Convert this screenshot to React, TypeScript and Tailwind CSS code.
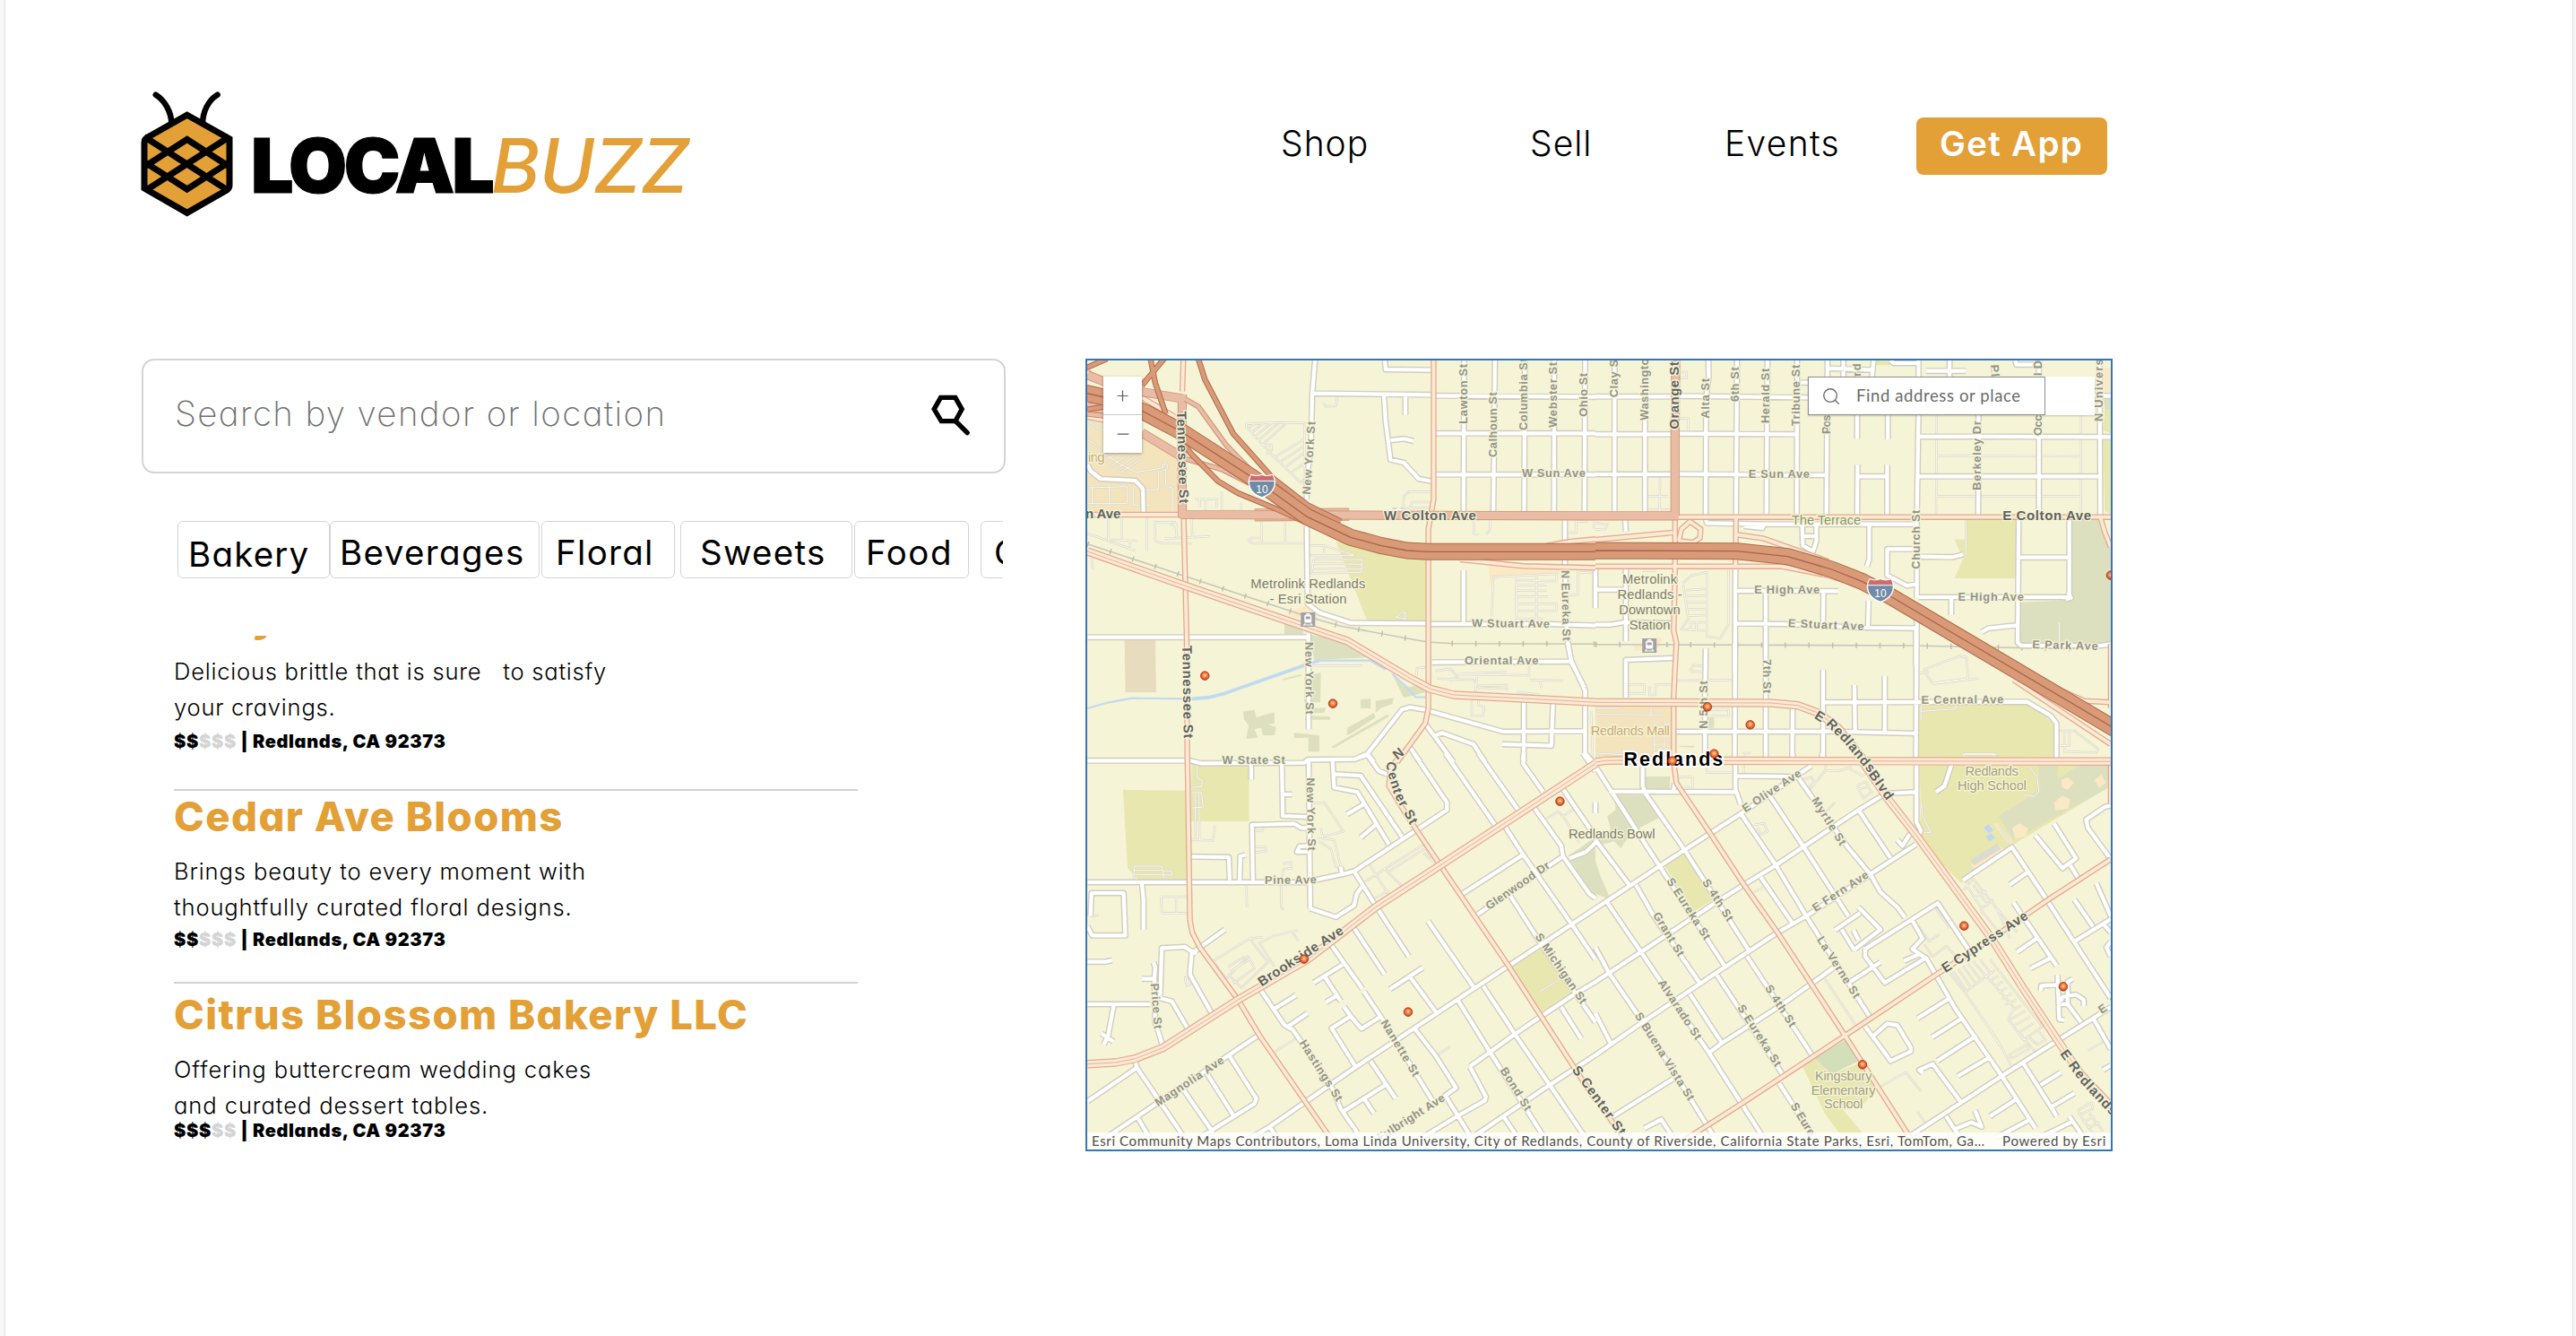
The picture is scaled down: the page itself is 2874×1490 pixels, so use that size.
import { Fragment } from "react";
import { Minus, Plus, Search } from "lucide-react";
import { clsx } from "clsx";

type Tile = "nw" | "ne" | "sw" | "se";
type Layer = Partial<Record<Tile, string[]>>;
type Point = [number, number];

const MAP_WIDTH = 1142;
const MAP_HEIGHT = 880;

// every tile has its own coordinate grid, x and y scale differ
const tiles: Record<Tile, { x: number; y: number; sx: number; sy: number }> = {
  nw: { x: -13, y: -12, sx: 580 / 1568, sy: 1 / 3 },
  ne: { x: 567, y: -12, sx: 590 / 1568, sy: 1 / 3 },
  sw: { x: -13, y: 438, sx: 580 / 1568, sy: 1 / 3 },
  se: { x: 567, y: 438, sx: 590 / 1568, sy: 1 / 3 },
};

function project(tile: Tile, x: number, y: number): Point {
  const t = tiles[tile];
  return [t.x + x * t.sx, t.y + y * t.sy];
}

function toPoints(tile: Tile, line: string): Point[] {
  return line.split(" ").map((pair) => {
    const [x, y] = pair.split(",").map(Number);
    return project(tile, x, y);
  });
}

function toPath(tile: Tile, line: string) {
  return "M" + toPoints(tile, line).map(([x, y]) => `${x.toFixed(1)} ${y.toFixed(1)}`).join("L");
}

function layerPath(layer: Layer) {
  return (Object.keys(layer) as Tile[])
    .flatMap((tile) => layer[tile]!.map((line) => toPath(tile, line)))
    .join("");
}

/* ---------- areas ---------- */

const parks: Layer = {
  nw: ["785,640 1062,700 1062,910 880,910"],
  ne: [
    "1098,570 1248,570 1248,765 1065,765 1090,700 1065,635 1098,635",
    "960,1185 1280,1185 1340,1230 1363,1260 1363,1372 955,1372",
    "825,36 955,36 955,52 830,52",
    "1505,300 1528,300 1528,550 1510,540",
    "1510,200 1528,190 1528,280 1505,270",
  ],
  sw: [
    "143,123 332,125 335,425 190,425 157,385",
    "350,35 523,35 523,228 348,228",
    "1315,715 1405,655 1500,805 1400,870",
  ],
  se: [
    "960,0 1360,0 1360,38 1528,38 1528,110 1240,305 1085,435 955,290 965,200",
    "205,375 265,337 350,490 290,530",
    "615,1050 650,1020 700,1075 800,1030 840,1115 790,1180 735,1195 795,1275 725,1275 680,1205",
  ],
};

const greens: Layer = {
  nw: [
    "630,915 680,930 690,952 630,952",
    "705,952 800,975 880,1030 720,1038",
    "690,1095 740,1080 738,1180 690,1180",
    "625,1102 680,1085 680,1092 625,1106",
    "505,1210 540,1205 545,1230 600,1213 600,1250 580,1255 605,1262 600,1290 565,1290 560,1265 540,1270 550,1298 515,1302 522,1258 508,1236",
    "658,1282 735,1290 735,1345 702,1345 702,1298 660,1300",
    "700,1200 756,1198 750,1214 700,1218",
    "712,1225 768,1228 768,1238 712,1238",
    "860,1170 890,1168 890,1200 860,1200",
    "905,1175 960,1165 955,1185 920,1200 905,1215",
    "820,1265 900,1215 905,1230 830,1285 818,1290",
    "770,1330 940,1220 945,1228 780,1333",
    "955,1085 1000,1130 1040,1120 1060,1145 990,1165",
  ],
  ne: [
    "1410,570 1495,570 1528,665 1528,985 1260,985 1258,845 1405,838",
    "1505,160 1528,160 1528,200 1510,200",
    "335,1230 352,1230 352,1265 335,1265",
    "248,1325 295,1325 290,1331 250,1329",
  ],
  sw: ["1568,280 1485,345 1560,480 1568,480"],
  se: [
    "1195,210 1435,40 1525,40 1515,120 1240,290",
    "1315,42 1370,42 1370,118 1315,118",
    "55,140 150,140 190,215 110,262 75,318 55,295 0,312 0,290 45,255 35,210 60,190",
    "145,78 222,78 220,120 148,120",
    "0,360 15,410 45,490 0,470",
  ],
};

const lots: Layer = {
  nw: ["36,232 90,245 205,290 322,380 322,548 205,548 36,545"],
  ne: ["0,1195 228,1195 228,1380 0,1380"],
};

const paleLots: Layer = {
  nw: ["1245,700 1480,730 1480,752 1280,756 1250,790", "630,885 680,862 700,850 730,890 720,925 690,905"],
  ne: ["1505,60 1528,60 1528,160 1505,150", "115,990 195,960 195,980 180,1005 115,1007"],
  se: [
    "1382,90 1402,80 1418,100 1400,122 1382,112",
    "1480,90 1500,72 1513,98 1495,116",
    "1360,165 1385,142 1408,155 1402,185 1365,192",
    "1236,250 1258,235 1283,252 1275,278 1245,285",
    "1112,372 1200,310 1215,325 1125,388",
    "1180,235 1195,235 1240,300 1225,305",
  ],
};

const pools: Layer = {
  se: ["1152,250 1165,238 1180,258 1166,268", "1158,280 1175,268 1185,284 1168,294"],
};

/* ---------- lines ---------- */

const water: Layer = {
  nw: ["36,1200 100,1180 170,1166 350,1168", "730,1040 890,1040 935,1070", "955,1085 1000,1130 1025,1162 1060,1163"],
};

const rail: Layer = {
  nw: ["36,650 700,893 800,925 1000,966 1062,978 1140,983 1568,985"],
  ne: ["0,986 930,990 1400,1001 1500,992"],
};

const lanes: Layer = {
  nw: [
    "515,265 515,248 610,244 690,245 692,430 680,445 600,360 520,265",
    "540,248 522,262", "565,247 530,278", "590,246 540,292", "612,246 550,305", "635,246 562,320",
    "600,360 690,300", "615,378 690,322", "630,395 690,345", "650,412 690,380", "562,320 590,318 592,335 575,350",
    "748,178 755,190 785,188 790,155",
    "36,240 90,275", "36,300 60,318 90,350 130,380 180,410 210,405", "100,395 165,345", "115,405 185,352", "130,415 200,365", "85,375 140,335",
    "210,405 265,395 262,385 275,382 278,395 260,408", "36,462 155,458 155,515 36,515", "50,460 50,515", "102,458 102,512", "175,465 175,520 230,520", "195,470 250,468 250,405", "272,400 272,455 292,462 292,540",
    "360,500 425,500 425,530", "375,500 375,528", "392,500 392,545", "441,475 441,540 500,540 500,512",
    "988,530 990,490 1005,475 1075,475", "1010,525 1015,510 1075,510", "965,545 985,530 1075,528",
    "98,560 98,635 185,640", "140,560 140,635", "165,640 165,668", "215,560 215,675", "36,615 180,672",
    "240,570 240,640 265,648 350,648", "268,632 405,625", "285,585 303,585 305,628", "350,565 352,628", "243,577 300,577 300,600",
    "560,560 562,648 690,648", "632,560 632,648", "520,640 530,630 560,630", "520,640 535,648 560,648",
    "705,655 750,655 840,688 705,688", "718,700 865,703 862,745 712,748 718,700", "716,715 862,718", "714,731 862,733", "748,655 750,680",
    "1200,572 1202,615 1215,620", "1250,570 1250,600 1240,618", "1480,612 1510,612 1510,575 1545,575", "1563,570 1563,600",
    "1255,890 1260,760 1450,750 1450,775 1328,770 1328,900", "1328,788 1420,788", "1328,806 1420,806", "1328,826 1425,826", "1328,850 1450,850 1450,873 1328,873", "1390,755 1390,900",
    "1330,830 1330,900 1410,900", "1515,740 1515,820 1490,822", "1515,745 1568,748",
    "710,1057 865,1057", "50,695 52,735",
    "967,895 985,878 995,880 995,910", "967,895 995,900",
    "1028,1090 1030,1065 1060,1062", "1085,1075 1130,1068 1145,1085 1368,1090 1368,1055", "1090,1100 1200,1105 1215,1130 1305,1135", "1130,1110 1160,1085 1300,1078", "1210,1095 1205,1160", "1215,1125 1305,1122", "1195,1165 1195,1225 1230,1225 1232,1195 1215,1190 1215,1165", "1335,1160 1335,1145 1400,1155", "1370,1105 1470,1108", "1400,1108 1405,1132",
    "1555,1210 1560,1370",
  ],
  ne: [
    "250,75 270,75 270,95 250,95", "250,230 275,230 275,270", "150,490 215,490", "192,425 190,540", "150,535 225,535",
    "1012,215 1010,550", "1012,355 1440,357", "1012,490 1440,490", "1440,215 1440,550", "1098,570 1098,685",
    "0,580 35,585 30,600 0,602",
    "285,755 330,745 330,960 370,965 395,920 395,735", "260,780 285,755", "260,785 275,900 255,935 325,940", "270,805 325,800", "270,825 325,822", "270,845 325,845", "272,868 325,868", "275,890 325,888", "278,912 325,912", "285,910 280,940", "300,910 298,940",
    "235,1108 410,1105", "280,1075 290,1055 322,1058", "280,1075 322,1080", "90,1120 145,1120 145,1150 90,1150", "160,1125 160,1155 178,1155 178,1120 225,1120",
    "0,1220 205,1222", "0,1200 70,1200", "165,1195 165,1222", "0,1350 85,1355 85,1335", "175,1240 175,1380", "205,1240 205,1380", "175,1262 205,1262", "175,1290 205,1290", "175,1320 205,1320", "175,1350 205,1350",
    "330,1205 395,1205 395,1225 340,1225",
    "960,1082 985,1080 975,1070 1080,1025 1100,1028 1105,1100 1000,1115 980,1085", "1135,1100 1000,1118",
    "965,1210 1070,1202 1070,1190", "965,1185 965,1240", "1085,1370 1095,1352 1175,1352 1190,1368",
    "1372,1275 1420,1275 1490,1335 1485,1348 1390,1345 1390,1275", "1375,1325 1405,1325 1405,1280",
    "1375,912 1375,980", "140,740 180,740", "150,1370 150,1380",
  ],
  sw: [
    "258,480 335,480", "258,480 260,535 338,535", "303,480 303,535", "345,290 415,292 420,240", "365,30 368,85 382,90 380,112 345,115",
    "345,132 380,132 385,180 345,184", "360,135 362,290", "372,135 374,290", "715,168 750,165 808,262 730,283", "740,250 745,285 780,290 800,380",
    "735,295 770,320 785,380 805,382", "175,425 178,378 260,378 268,425", "178,392 262,392", "178,406 290,408 290,395 265,395", "865,435 1050,305 1080,365 1050,335",
    "885,370 945,475", "930,385 985,445", "945,395 1060,315", "895,490 945,460", "415,695 525,620 565,615", "415,695 455,755 520,680 540,720 475,770",
    "525,620 580,700 500,785 460,740", "460,715 510,680", "468,730 525,690", "600,715 555,635 600,610 670,592", "655,600 672,628", "600,1000 665,955", "515,435 517,515", "620,435 620,515 628,525",
    "535,262 565,258 565,240", "535,332 575,328 572,314 537,314", "625,370 650,365 652,385 628,388 620,425", "1090,1012 1130,980", "1400,798 1465,755",
    "332,765 330,750 345,752 345,775 335,778 332,765", "1420,220 1455,195 1470,210 1505,185", "1470,210 1520,300", "45,545 70,542",
  ],
  se: [
    "330,48 330,65 410,65 410,40", "245,120 245,80 288,80 288,120 265,110", "630,130 680,60 685,35", "610,90 640,80 650,100 630,115", "650,150 680,200 710,165", "685,58 720,60 760,45",
    "750,50 790,75 820,60", "775,110 800,95 820,130 795,150 775,110", "780,120 810,112", "470,240 500,235 510,262 490,272 480,250", "470,465 500,448", "460,0 440,0 440,70",
    "965,165 970,210 995,265 970,265", "1090,5 1190,5 1175,0", "1310,80 1315,130 1300,145 1270,140", "1285,45 1310,80", "1195,240 1235,310",
    "1090,460 1120,420 1190,520 1250,600", "1105,450 1145,520", "1120,440 1165,510", "1145,520 1180,490", "1120,485 1160,460", "1140,520 1190,590", "1190,520 1230,620",
    "945,560 990,630 1020,605", "975,640 1000,680 1040,645 1070,680", "1010,520 1050,585",
    "1050,735 1095,800 1180,730", "1060,730 1100,795", "1075,722 1115,785", "1090,712 1130,775", "1105,705 1145,762", "1120,695 1160,750", "1140,690 1175,740", "1170,690 1325,915 1270,960 1225,890 1240,850 1150,735",
    "1185,725 1160,745", "1195,745 1170,762", "1208,765 1182,782", "1220,785 1195,800", "1235,805 1205,822", "1248,825 1215,842", "1262,845 1232,862", "1275,862 1232,890", "1290,882 1240,912", "1300,902 1255,935",
    "1095,800 1200,975 1235,1050", "1150,890 1200,980", "1225,1010 1280,975 1285,990 1235,1020 1225,1010", "1260,940 1305,1000", "1280,945 1310,975 1335,960 1310,925",
    "680,755 775,915", "845,1115 920,1068 965,1130", "740,1100 770,1085 810,1130", "755,1120 780,1160", "955,1200 980,1240", "1460,995 1510,962",
    "1430,1195 1470,1170 1475,1190 1435,1210 1430,1195", "1440,1215 1480,1280", "1465,1205 1505,1265", "1445,1235 1480,1215", "1458,1255 1495,1235", "1100,425 1105,455",
  ],
};

const streets: Layer = {
  nw: [
    "722,36 714,148 710,320 697,440 697,500", "697,590 700,850 735,880 830,914 1062,916", "1065,918 1430,918 1568,923",
    "702,950 703,1270", "36,962 700,962", "714,146 1075,151", "1085,154 1568,158", "933,36 935,66 1075,68",
    "930,150 935,240 950,368 990,378 1035,432 1075,440", "950,303 990,298 1020,306", "995,150 995,218",
    "1085,280 1568,280", "1085,418 1568,418", "1172,36 1170,545", "1265,36 1260,545", "1355,36 1353,545", "1444,36 1443,548", "1537,36 1535,548",
    "1170,738 1170,916", "1476,570 1476,710 1482,960 1495,1040 1537,1140 1537,1350 1560,1380", "1484,980 1495,1045 1535,1130", "1075,1046 1490,1043",
    "36,385 45,405 75,432 180,438 203,465 205,548", "1070,1210 1290,1278 1537,1276", "1352,1175 1352,1380", "1440,1185 1435,1325 1287,1320",
    "1065,1207 1010,1196 985,1204 880,1352 842,1370", "1057,1255 1140,1380", "1083,1292 1105,1282 1200,1320 1235,1380", "1005,1325 1040,1380", "880,1352 900,1380",
    "975,530 975,545", "955,540 990,540",
  ],
  ne: [
    "0,157 225,157", "250,155 630,160", "0,283 225,283", "250,281 595,283", "0,417 225,417", "250,416 685,420", "57,36 57,548", "147,36 147,545",
    "335,36 336,90 328,160 327,560", "420,36 417,550", "510,36 507,550", "598,36 597,550", "688,36 685,550", "776,215 776,298", "777,385 776,555",
    "867,215 867,300", "865,385 865,555", "776,424 865,424", "958,36 958,215 953,560 953,830", "953,900 950,1380", "960,290 1528,292", "958,424 1495,424",
    "1136,215 1135,552", "1315,36 1315,540", "1495,36 1497,552", "690,62 825,68", "735,36 735,95", "825,36 820,92", "610,110 630,110", "980,71 1098,71", "1050,36 1050,90",
    "1245,36 1248,50 1310,50", "1480,153 1528,155", "875,36 885,45 955,45", "1180,50 1185,90",
    "327,565 330,580 500,584 950,584", "440,590 495,597 500,585", "613,590 615,655 645,675 655,640 655,590", "618,624 655,624", "812,590 812,700 805,725",
    "955,667 865,667 865,755 925,790 955,782", "960,692 1060,694 1090,685", "1255,570 1252,980 1262,990 1500,990 1528,985", "1405,570 1405,830 1380,828",
    "1255,695 1405,695", "958,828 1400,828", "1400,810 1410,830 1395,835", "1055,830 1055,888", "1145,945 1165,932 1250,922", "415,735 413,1380", "413,985 413,1080",
    "418,806 720,808", "676,810 675,916", "505,810 505,1180", "418,916 560,918 800,930 950,932", "810,840 808,930", "0,803 90,803", "90,735 90,975",
    "0,920 45,920 85,912 225,916", "88,570 90,608", "0,735 0,865", "228,1032 90,1038 90,1165", "327,1000 325,1160", "325,1200 325,1380", "505,1195 505,1380",
    "585,1200 583,1380", "675,1070 675,1380", "680,1180 1280,1178 1350,1225 1367,1250 1367,1380", "768,1122 770,1280", "858,1092 858,1278", "235,1278 700,1277 950,1284", "950,930 950,1060",
  ],
  sw: [
    "36,25 345,25 378,34 690,32 700,22 842,20 880,5 915,60 945,72", "530,32 530,88", "622,30 625,210 700,213", "625,138 653,138", "703,25 708,520",
    "775,25 780,115 850,130 945,305", "780,70 860,75 985,280", "818,205 868,172", "860,282 905,240", "535,425 532,240 660,236 680,250 700,250",
    "700,310 675,312 668,330 700,330", "345,346 462,348 465,425", "495,425 497,345 513,340", "36,432 690,432 805,405 840,395 1120,190 1120,165 1020,0",
    "708,520 785,548 840,510 848,470 865,445", "800,380 803,405", "840,395 905,510 1005,680", "840,585 932,740", "770,640 865,788", "870,798 925,890 1075,1160",
    "718,768 805,708", "753,750 800,830", "755,833 790,810", "810,848 830,880 772,920 845,1050", "830,880 862,922 915,885",
    "560,795 630,910 655,925 770,1110 800,1190 850,1270", "600,855 665,810", "640,915 700,870", "1063,562 1205,790", "948,790 1047,718", "1010,750 1088,868",
    "440,1345 585,1250 845,1050 1205,785 1405,640 1568,520", "585,1250 610,1290", "805,1200 935,1110", "1190,1048 1250,1000 1325,940 1405,880 1500,810 1568,765",
    "1190,1050 1238,1150 1235,1162 1155,1212 1040,1290", "1190,1290 1290,1215 1430,1110 1568,1010", "1025,925 1088,1015 1148,1120 1115,1145 1190,1280", "890,1030 965,1155",
    "870,1155 900,1205", "1155,830 1250,1000 1410,1280", "1230,780 1325,940 1430,1110 1540,1290", "1290,1215 1330,1280", "1115,0 1265,240", "1295,245 1350,340 1495,570 1568,690",
    "1215,0 1335,190", "1350,0 1350,35 1410,130", "1385,185 1465,310 1470,345", "1470,120 1568,280", "1530,0 1568,60", "1165,472 1350,340", "1205,545 1470,345", "1490,352 1540,330 1568,300",
    "1310,475 1405,640 1568,900", "1470,345 1550,470 1568,485", "1465,850 1525,955", "1568,165 1568,200",
    "36,580 50,610 150,610 145,468 48,468 45,545", "200,435 205,490 205,590", "36,698 90,698 110,693", "235,700 240,715 238,755 200,755",
    "36,840 225,840", "365,670 345,660 330,648 260,652 255,820 290,830 340,925", "450,590 350,670 345,740 413,875", "238,755 240,900 262,975",
    "115,845 98,945 85,975", "78,938 115,965", "36,1165 185,1052", "180,1030 185,1052 330,1290", "80,1295 550,945", "185,1215 225,1290", "325,1125 415,1270",
    "395,1070 475,1210", "465,1015 545,1155 540,1172 370,1290",
  ],
  se: [
    "0,520 190,378 430,203 640,42", "0,765 135,665 350,505 440,440 535,375 780,190 860,135 950,130", "0,1010 140,900 375,722 540,600 625,545 815,405 950,305",
    "340,1000 375,970 555,840 710,715", "45,1220 230,1090", "0,45 190,378 385,715", "360,742 555,1075", "545,1105 650,1290", "145,130 265,325 455,660", "450,680 645,1015",
    "430,200 535,375 625,545 815,885", "515,140 620,318 750,545", "600,80 745,310 815,405 845,465 895,515 918,550", "780,190 875,350", "490,415 585,570",
    "0,290 100,440", "120,440 170,540 310,770", "35,500 135,665 335,1000 500,1290", "0,650 40,735 140,900 350,1280", "280,805 375,970", "0,870 45,970",
    "40,128 420,130", "140,45 140,110 150,135", "235,100 232,125", "415,30 415,120 430,170", "420,76 560,78 600,80", "952,30 952,230 965,260 955,285", "955,260 930,275 910,310 895,290",
    "1055,40 1035,110 1010,130", "585,0 585,20", "672,0 672,22", "1367,0 1367,20", "505,0 505,20", "1090,425 1235,315 1335,485 1528,820",
    "1305,275 1385,385 1425,352 1360,235", "1408,375 1430,415", "1528,175 1510,180 1455,222 1460,250 1525,350", "1228,440 1280,400", "1485,435 1528,545", "1420,490 1475,580",
    "1420,630 1528,555", "1250,665 1308,620", "1290,720 1350,685", "1240,500 1368,712", "800,655 1015,502 1105,655", "800,655 800,680 858,768 980,685 1070,860 1205,1080 1305,1255",
    "940,560 970,620 940,655 985,690", "915,695 965,670", "755,765 845,700", "710,592 785,535", "780,515 845,590 770,655", "730,590 768,660", "765,592 780,625",
    "955,887 1050,820", "998,950 1090,885", "1013,1030 1130,945", "1075,1080 1165,1020", "1170,1215 1245,1160", "800,915 850,990 875,1030 935,998 935,985 895,910 865,905 825,945",
    "970,1070 960,1060 1000,1040 1085,1170", "920,1290 1205,1080 1365,965 1528,850", "1270,1040 1368,1215", "1320,1110 1380,1068", "1350,1185 1420,1138", "1475,885 1528,990", "1505,570 1528,600",
    "1370,742 1375,890 1390,893", "1320,795 1322,778 1370,775", "1380,830 1385,815 1425,808 1448,825 1448,845", "1415,755 1400,765 1400,840 1440,900", "1380,840 1400,840",
    "1405,1215 1450,1290", "1040,1215 1080,1285", "1060,1260 1115,1235 1145,1250 1125,1195", "1190,1285 1290,1225", "1310,1290 1410,1235", "1505,1060 1528,1045",
    "145,1255 195,1225 230,1285", "1528,630 1515,650 1528,680", "70,1290 90,1280",
  ],
};

const arterials: Layer = {
  nw: [
    "1080,36 1080,500 1064,600 1064,1200 1055,1250 970,1380", "325,36 322,140", "326,560 335,960 337,1380", "36,552 320,552", "1160,702 1350,724 1568,730", "1420,656 1490,642 1568,634",
    "200,160 300,225", "36,75 90,115", "36,225 85,235",
  ],
  ne: [
    "245,560 1528,560", "236,570 236,750 232,940 240,980 238,1020 232,1160 232,1380", "417,560 415,730", "247,640 255,600 280,575 312,600 310,630 290,645 247,640",
    "0,636 230,612", "415,618 500,632 690,708", "0,725 550,725 690,755 760,780", "1497,560 1510,610 1528,660", "1370,1135 1450,1175 1528,1180",
    "1528,985 1528,1200", "1240,1105 1528,1320",
  ],
  sw: [
    "337,0 343,430 345,560 352,600 375,650 490,825 555,945 770,1290", "985,0 950,50 945,110 1000,210 1100,375 1305,710 1500,1045 1568,1160",
  ],
  se: [
    "232,30 240,100 340,268 440,440 540,600 740,945 935,1290", "270,1290 430,1175 740,945 1005,745 1175,620 1340,492 1528,355", "0,1145 70,1270", "1528,40 1528,170",
  ],
};

const avenues: Layer = {
  nw: ["36,675 330,790 700,930 820,975 1010,1100 1070,1135 1140,1155 1405,1170 1568,1180"],
  ne: ["0,1180 520,1182 600,1190 660,1215 720,1265 800,1380"],
  sw: ["36,1040 120,1035 180,1022 265,985 490,825 700,690 905,515 1100,375 1410,150 1568,35"],
  se: ["0,30 30,25 230,22", "225,25 1528,28", "775,0 865,150 955,280 1175,620 1270,790 1370,960 1440,1075 1528,1180"],
};

const boulevards: Layer = {
  nw: ["322,150 320,300 322,552 1568,556", "36,85 140,130 330,165", "200,278 330,365", "36,190 90,200"],
  ne: ["238,36 236,300 236,556", "0,556 245,556"],
};

const wideBoulevard: Layer = {
  nw: ["540,553 825,551"],
};

const ramps: Layer = {
  nw: ["330,165 370,190 455,320 560,440", "330,365 440,400 530,450 700,565", "36,215 90,222"],
};

const freewayRamps: Layer = {
  nw: ["370,30 390,100 475,280 595,430 700,520 800,575", "267,30 200,120", "226,30 240,110 272,215", "30,62 95,30", "285,255 350,350 430,440 490,480 600,530 740,600", "36,200 90,190"],
};

const freeway: Layer = {
  nw: ["30,145 110,165 210,210 320,275 530,425 700,560 830,628 920,655 1000,672 1062,676 1568,676"],
  ne: ["0,672 420,674 570,692 700,735 790,775 870,822 1100,975 1540,1268"],
};

/* ---------- labels ---------- */

type Label = {
  tile: Tile;
  text: string;
  line: string;
  kind?: "main" | "place" | "city" | "school" | "terrace" | "mall";
};

const labels: Label[] = [
  { tile: "nw", text: "Tennessee St", line: "320,206 328,514", kind: "main" },
  { tile: "nw", text: "Tennessee St", line: "337,990 341,1300", kind: "main" },
  { tile: "nw", text: "New York St", line: "695,484 711,240" },
  { tile: "nw", text: "New York St", line: "705,978 707,1220" },
  { tile: "nw", text: "Lawton St", line: "1168,248 1168,48" },
  { tile: "nw", text: "Calhoun St", line: "1257,360 1257,142" },
  { tile: "nw", text: "Columbia St", line: "1350,270 1350,28" },
  { tile: "nw", text: "Webster St", line: "1439,260 1439,42" },
  { tile: "nw", text: "Ohio St", line: "1532,224 1532,78" },
  { tile: "nw", text: "W Sun Ave", line: "1346,412 1538,412" },
  { tile: "nw", text: "W Colton Ave", line: "930,553 1208,553", kind: "main" },
  { tile: "nw", text: "n Ave", line: "30,548 136,548", kind: "main" },
  { tile: "nw", text: "ing", line: "38,358 88,358", kind: "mall" },
  { tile: "nw", text: "Metrolink Redlands", line: "528,781 874,781", kind: "place" },
  { tile: "nw", text: "- Esri Station", line: "585,832 818,832", kind: "place" },
  { tile: "nw", text: "W Stuart Ave", line: "1195,914 1430,916" },
  { tile: "nw", text: "Oriental Ave", line: "1173,1040 1396,1040" },
  { tile: "nw", text: "N Eureka St", line: "1478,738 1482,974" },
  { tile: "ne", text: "Clay St", line: "55,160 55,18" },
  { tile: "ne", text: "Washington St", line: "145,236 145,-50" },
  { tile: "ne", text: "Orange St", line: "232,266 232,40", kind: "main" },
  { tile: "ne", text: "Alta St", line: "325,230 325,96" },
  { tile: "ne", text: "6th St", line: "414,174 414,58" },
  { tile: "ne", text: "Herald St", line: "504,246 504,62" },
  { tile: "ne", text: "Tribune St", line: "593,256 593,50" },
  { tile: "ne", text: "Pos", line: "683,282 683,218" },
  { tile: "ne", text: "rd", line: "774,90 774,46" },
  { tile: "ne", text: "Pl", line: "1184,50 1186,90" },
  { tile: "ne", text: "Occ", line: "1311,288 1311,218" },
  { tile: "ne", text: "l D", line: "1311,88 1311,36" },
  { tile: "ne", text: "N University", line: "1492,240 1492,-25" },
  { tile: "ne", text: "Berkeley Dr", line: "1131,470 1131,238" },
  { tile: "ne", text: "Church St", line: "951,734 951,536" },
  { tile: "ne", text: "E Sun Ave", line: "454,415 635,415" },
  { tile: "ne", text: "The Terrace", line: "582,569 787,569", kind: "terrace" },
  { tile: "ne", text: "E Colton Ave", line: "1207,555 1470,555", kind: "main" },
  { tile: "ne", text: "E High Ave", line: "471,802 665,802" },
  { tile: "ne", text: "E High Ave", line: "1075,827 1270,827" },
  { tile: "ne", text: "E Stuart Ave", line: "571,914 796,925" },
  { tile: "ne", text: "E Park Ave", line: "1295,985 1490,991" },
  { tile: "ne", text: "E Central Ave", line: "966,1171 1210,1169" },
  { tile: "ne", text: "7th St", line: "508,1035 508,1150" },
  { tile: "ne", text: "N 5th St", line: "320,1268 320,1108" },
  { tile: "ne", text: "Metrolink", line: "80,768 242,768", kind: "place" },
  { tile: "ne", text: "Redlands -", line: "65,819 257,819", kind: "place" },
  { tile: "ne", text: "Downtown", line: "70,870 252,870", kind: "place" },
  { tile: "ne", text: "Station", line: "100,921 222,921", kind: "place" },
  { tile: "ne", text: "Redlands Mall", line: "-14,1274 220,1274", kind: "mall" },
  { tile: "ne", text: "E Redlands", line: "655,1218 700,1250 745,1300 818,1400", kind: "main" },
  { tile: "se", text: "Blvd", line: "820,62 876,150", kind: "main" },
  { tile: "se", text: "Redlands", line: "84,20 378,20", kind: "city" },
  { tile: "sw", text: "W State St", line: "442,22 632,22" },
  { tile: "sw", text: "N Center St", line: "985,-8 962,12 952,50 975,135 1040,270", kind: "main" },
  { tile: "sw", text: "New York St", line: "709,82 713,326" },
  { tile: "sw", text: "Pine Ave", line: "570,424 727,422" },
  { tile: "sw", text: "Brookside Ave", line: "553,768 803,588", kind: "main" },
  { tile: "sw", text: "Price St", line: "239,770 250,922" },
  { tile: "sw", text: "Magnolia Ave", line: "242,1172 444,1022" },
  { tile: "sw", text: "Hastings St", line: "684,962 798,1160" },
  { tile: "sw", text: "Nanette St", line: "930,894 1030,1078" },
  { tile: "sw", text: "Fulbright Ave", line: "912,1288 1110,1148" },
  { tile: "sw", text: "Bond St", line: "1290,1054 1368,1192" },
  { tile: "sw", text: "S Michigan St", line: "1395,606 1535,834" },
  { tile: "sw", text: "Glenwood Dr", line: "1240,514 1426,370" },
  { tile: "sw", text: "S Center St", line: "1508,1050 1652,1272", kind: "main" },
  { tile: "sw", text: "Redlands Bowl", line: "1487,268 1748,268", kind: "place" },
  { tile: "se", text: "E Olive Ave", line: "438,188 606,62" },
  { tile: "se", text: "Myrtle St", line: "650,150 736,304" },
  { tile: "se", text: "E Fern Ave", line: "646,520 806,402" },
  { tile: "se", text: "S Eureka St", line: "220,420 334,620" },
  { tile: "se", text: "S 4th St", line: "326,424 402,558" },
  { tile: "se", text: "Grant St", line: "180,534 256,676" },
  { tile: "se", text: "Alvarado St", line: "194,760 308,954" },
  { tile: "se", text: "La Verne St", line: "666,616 778,816" },
  { tile: "se", text: "S 4th St", line: "512,778 588,912" },
  { tile: "se", text: "S Eureka St", line: "430,844 544,1044" },
  { tile: "se", text: "S Buena Vista St", line: "126,870 286,1158" },
  { tile: "se", text: "S Eure", line: "588,1172 644,1276" },
  { tile: "se", text: "E Cypress Ave", line: "1030,722 1278,538", kind: "main" },
  { tile: "se", text: "E Redlands", line: "1388,996 1450,1092 1530,1190 1580,1240", kind: "main" },
  { tile: "se", text: "E D", line: "1494,862 1550,818" },
  { tile: "se", text: "Redlands", line: "1096,60 1254,60", kind: "school" },
  { tile: "se", text: "High School", line: "1074,108 1278,108", kind: "school" },
  { tile: "se", text: "Kingsbury", line: "651,1078 820,1078", kind: "school" },
  { tile: "se", text: "Elementary", line: "640,1126 831,1126", kind: "school" },
  { tile: "se", text: "School", line: "678,1173 793,1173", kind: "school" },
];

const labelStyles = {
  street: "fill-[#939387] text-[12.8px] font-bold",
  main: "fill-[#62625e] text-[15px] font-bold",
  place: "fill-[#7d7d6c] text-[14.8px]",
  school: "fill-[#a3a07a] text-[14.8px]",
  terrace: "fill-[#8c9468] text-[14.8px]",
  mall: "fill-[#c9a873] text-[14.8px]",
  city: "fill-black text-[21.5px] font-bold",
};

const markers: [Tile, number, number][] = [
  ["nw", 390, 1091],
  ["nw", 776, 1184],
  ["ne", 332, 1195],
  ["ne", 459, 1255],
  ["ne", 352, 1352],
  ["ne", 1528, 755],
  ["sw", 1461, 161],
  ["sw", 689, 689],
  ["sw", 1003, 866],
  ["se", 228, 26],
  ["se", 1093, 578],
  ["se", 1387, 781],
  ["se", 792, 1042],
];

function Road({ layer, casing, fill, width, edge = 2.4 }: { layer: Layer; casing: string; fill: string; width: number; edge?: number }) {
  const d = layerPath(layer);
  return (
    <>
      <path d={d} stroke={casing} strokeWidth={width + edge} />
      <path d={d} stroke={fill} strokeWidth={width} />
    </>
  );
}

function MapLabel({ label, id }: { label: Label; id: string }) {
  const points = toPoints(label.tile, label.line);
  const className = clsx("font-['Liberation_Sans',Arial,sans-serif]", labelStyles[label.kind ?? "street"]);
  const halo = {
    stroke: label.kind === "city" ? "#ffffff" : "#f5f4d8",
    strokeWidth: label.kind === "city" ? 4 : 2.6,
    paintOrder: "stroke",
    strokeLinejoin: "round" as const,
  };

  if (points.length > 2) {
    return (
      <>
        <path id={id} d={toPath(label.tile, label.line)} fill="none" />
        <text className={className} dy="0.36em" letterSpacing={0.9} {...halo}>
          <textPath href={`#${id}`}>{label.text}</textPath>
        </text>
      </>
    );
  }

  const [[x1, y1], [x2, y2]] = points;
  const angle = (Math.atan2(y2 - y1, x2 - x1) * 180) / Math.PI;
  return (
    <text
      className={className}
      transform={`translate(${x1} ${y1}) rotate(${angle})`}
      dy="0.36em"
      textLength={Math.hypot(x2 - x1, y2 - y1)}
      {...halo}
    >
      {label.text}
    </text>
  );
}

function Shield({ at }: { at: Point }) {
  return (
    <g transform={`translate(${at[0]} ${at[1]})`}>
      <path d="M-12 -12.5C-8 -11 -4 -11 0 -12.5C4 -11 8 -11 12 -12.5C17 -4 15 8 0 13C-15 8 -17 -4 -12 -12.5Z" fill="#6f8ba6" stroke="#fff" strokeWidth="1.4" />
      <path d="M-12 -12C-8 -10.5 -4 -10.5 0 -12C4 -10.5 8 -10.5 12 -12L13.6 -6H-13.6Z" fill="#cf6b6b" />
      <path d="M-14 -5.6H14" stroke="#fff" strokeWidth="1" />
      <text y="7.5" textAnchor="middle" className="fill-white font-['Liberation_Sans',Arial,sans-serif] text-[12px]">
        10
      </text>
    </g>
  );
}

function Station({ at }: { at: Point }) {
  return (
    <g transform={`translate(${at[0]} ${at[1]})`}>
      <rect x="-8" y="-8" width="16" height="16" fill="#a3a3a3" />
      <rect x="-4" y="-5.5" width="8" height="9" rx="1.5" fill="#fff" />
      <rect x="-2.5" y="-3.5" width="5" height="3" fill="#a3a3a3" />
      <rect x="-2" y="-7" width="4" height="1.5" fill="#fff" />
      <path d="M-3 4L-5 6.5M3 4L5 6.5M-4 6H4" stroke="#fff" strokeWidth="1.2" />
    </g>
  );
}

function StreetMap() {
  const freewayPath = layerPath(freeway);
  return (
    <svg viewBox={`0 0 ${MAP_WIDTH} ${MAP_HEIGHT}`} className="block size-full bg-[#f5f4d6]">
      <defs>
        <radialGradient id="marker" cx="0.5" cy="0.45" r="0.55">
          <stop offset="0" stopColor="#ffd9a0" />
          <stop offset="0.45" stopColor="#f08a45" />
          <stop offset="1" stopColor="#c8331d" />
        </radialGradient>
      </defs>

      <path d={layerPath(lots)} fill="#f3e4bd" />
      <path d={toPath("nw", "148,972 241,972 243,1146 150,1146")} fill="#e7ddbe" />
      <path d={layerPath(parks)} fill="#e8e7b0" />
      <path d={layerPath(greens)} fill="#dde0bf" />
      <path d={toPath("se", "650,1020 740,960 780,1030 700,1075")} fill="#d3dfbb" />
      <path d={layerPath(paleLots)} fill="#fbe9c6" />
      <path d={toPath("se", "1112,358 1190,302 1203,320 1122,376")} fill="#dcdbcf" />
      <path d={layerPath(pools)} fill="#bcd8f3" />

      <g fill="none" strokeLinejoin="round">
        <path d={layerPath(water)} stroke="#c0daf1" strokeWidth="2.2" />
        <path d={toPath("nw", "350,1168 400,1164 450,1150 700,1052 735,1040")} stroke="#c0daf1" strokeWidth="3.8" />
        <Road layer={lanes} casing="#dad7c8" fill="#fbfaf0" width={1} edge={1.4} />
        <path d={layerPath(rail)} stroke="#c9c7b9" strokeWidth="1.6" />
        <path d={layerPath(rail)} stroke="#bdbbae" strokeWidth="6" strokeDasharray="1.4 25" />
        <Road layer={streets} casing="#d0cdbf" fill="#ffffff" width={4.2} edge={2.8} />
        <Road layer={arterials} casing="#e6a98c" fill="#faead5" width={3.8} edge={2.6} />
        <Road layer={avenues} casing="#e6a98c" fill="#faead5" width={7} edge={2.4} />
        <path d={layerPath(avenues)} stroke="#e8b095" strokeWidth="1" />
        <Road layer={wideBoulevard} casing="#d69474" fill="#e9bca5" width={12.5} edge={1.8} />
        <Road layer={boulevards} casing="#d69474" fill="#e9bca5" width={8.4} edge={1.8} />
        <Road layer={ramps} casing="#cf8f70" fill="#e9bca5" width={4} edge={2} />
        <Road layer={freewayRamps} casing="#b0694c" fill="#d99a78" width={4.4} edge={2} />
        <path d={freewayPath} stroke="#b0694c" strokeWidth="19" />
        <path d={freewayPath} stroke="#d99a78" strokeWidth="17" />
        <path d={freewayPath} stroke="#a8644a" strokeWidth="1.3" />
      </g>

      <Station at={project("nw", 701, 903)} />
      <Station at={project("ne", 160, 990)} />
      {labels.map((label, i) => (
        <Fragment key={i}>
          <MapLabel label={label} id={`label-${i}`} />
        </Fragment>
      ))}
      <Shield at={project("nw", 562, 456)} />
      <Shield at={project("ne", 845, 805)} />

      {markers.map(([tile, x, y]) => {
        const [cx, cy] = project(tile, x, y);
        return <circle key={`${tile}-${x}`} cx={cx} cy={cy} r="4.8" fill="url(#marker)" stroke="#a8341f" strokeWidth="0.8" />;
      })}
    </svg>
  );
}

function BeeMark() {
  return (
    <svg viewBox="0 0 106 144" className="h-36 w-[106px]" fill="none" stroke="#000" strokeWidth="7">
      <path d="M35.4 38C35.2 25 28 12 17.8 5.7M70 38C70.2 25 76 12 86.6 5.7" strokeLinecap="round" strokeWidth="6.5" />
      <path d="M52.7 28.2L100 54.8V107Q100 110 97 112L52.7 137.4L5 110V59Q5 55.5 8 53.5Z" fill="#e2a037" />
      <path d="M5 52.5L99 112.8M100 52.5L6 112.8M5 86L52.7 55.5L100 86M5 80.6L52.7 111L100 80.6" />
    </svg>
  );
}

const chips = [
  { name: "Bakery", className: "w-[170px] pl-[11px] pt-[2px] tracking-[1.2px]" },
  { name: "Beverages", className: "w-[234px] pl-[10px] tracking-[1.4px]" },
  { name: "Floral", className: "ml-[2px] w-[149px] pl-[15px] tracking-[1.3px]" },
  { name: "Sweets", className: "ml-[6px] w-[192px] pl-[21px] tracking-[1.3px]" },
  { name: "Food", className: "ml-[2px] w-[128px] pl-[12px] tracking-[1.5px]" },
  { name: "Crafts", className: "ml-[13px] w-[150px] pl-[14px]" },
];

const vendors = [
  {
    name: "Gary’s Brittle",
    lines: ["Delicious brittle that is sure \u00a0 to satisfy", "your cravings."],
    price: 2,
    className: "-mt-[48px] pb-[41px] border-b-2",
    textClassName: "tracking-[0.75px]",
    priceClassName: "mt-[6px]",
  },
  {
    name: "Cedar Ave Blooms",
    lines: ["Brings beauty to every moment with", "thoughtfully curated floral designs."],
    price: 2,
    className: "pt-[2px] pb-[35px] border-b-2",
    textClassName: "tracking-[0.85px]",
    priceClassName: "mt-[4px]",
  },
  {
    name: "Citrus Blossom Bakery LLC",
    lines: ["Offering buttercream wedding cakes", "and curated dessert tables."],
    price: 3,
    className: "pt-[8px]",
    textClassName: "tracking-[0.9px]",
    priceClassName: "-mt-[4px]",
  },
];

function VendorCard({ vendor }: { vendor: (typeof vendors)[number] }) {
  return (
    <article className={clsx("w-[763px] border-[#d1d1d1]", vendor.className)}>
      <h2 className="h-[54px] text-[45.5px] leading-[54px] font-extrabold tracking-[1.4px] text-[#e2a037]">{vendor.name}</h2>
      <p className={clsx("mt-[14px] text-[25.6px] leading-[40px] font-light", vendor.textClassName)}>
        {vendor.lines.map((line) => (
          <span key={line} className="block whitespace-nowrap">
            {line}
          </span>
        ))}
      </p>
      <p className={clsx("text-[20px] leading-6 font-black tracking-[0.65px]", vendor.priceClassName)}>
        {"$".repeat(vendor.price)}
        <span className="text-[#d4d4d4]">{"$".repeat(5 - vendor.price)}</span> | Redlands, CA 92373
      </p>
    </article>
  );
}

export default function App() {
  return (
    <div className="h-[1490px] w-[2874px] overflow-hidden bg-[#f7f7f7] pr-[3px] pl-[5px] font-[Inter,sans-serif] text-black [font-feature-settings:'cv11']">
      <div className="h-full border-x border-[#dedede] bg-white">
        <header className="flex h-[400px] items-start pt-[100px] pl-[150px]">
          <a className="flex w-[1276px] items-start">
            <BeeMark />
            <span className="mt-[42px] ml-[18px] flex text-[84px] leading-[85px]">
              <span className="font-black tracking-[-3.2px] [-webkit-text-stroke:1.2px_black]">LOCAL</span>
              <span className="-ml-[1px] font-medium tracking-[-1.2px] text-[#e2a037] italic">BUZZ</span>
            </span>
          </a>
          <nav className="mt-[31px] flex text-[39px] leading-[58px] font-light tracking-[1px]">
            <a className="-ml-[3px] w-[278px]">Shop</a>
            <a className="w-[217px]">Sell</a>
            <a className="w-[214px] tracking-[1.3px]">Events</a>
            <a className="h-16 w-[213px] rounded-lg bg-[#e2a037] pl-[26px] text-[38.5px] font-semibold tracking-[1.3px] text-white">Get App</a>
          </nav>
        </header>

        <main className="flex items-start pl-[152px]">
          <section className="w-[1053px]">
            <div className="flex h-[128px] w-[964px] items-center rounded-[14px] border-2 border-[#d4d4d4] pr-[35px] pl-[35px]">
              <span className="flex-1 pb-[5px] text-[38.5px] font-extralight tracking-[1.37px] text-[#707070]">Search by vendor or location</span>
              <svg viewBox="108 52 146 150" className="mb-[2px] h-[50px] w-[49px]" fill="none" stroke="#000" strokeWidth="16">
                <path d="M148 68H197L219 107L197 147H150L126 107Z" />
                <path d="M199 148L237 186" strokeLinecap="round" />
              </svg>
            </div>

            <div className="mt-[53px] flex h-16 w-[961px] overflow-hidden pl-[40px]">
              {chips.map((chip) => (
                <span key={chip.name} className={clsx("h-16 shrink-0 rounded-md border border-[#d4d4d4] text-[38.5px] leading-[68px]", chip.className)}>
                  {chip.name}
                </span>
              ))}
            </div>

            <div className="mt-16 flex h-[600px] flex-col overflow-hidden pl-[36px]">
              {vendors.map((vendor) => (
                <VendorCard key={vendor.name} vendor={vendor} />
              ))}
            </div>
          </section>

          <section className="relative h-[884px] w-[1146px] overflow-hidden border-2 border-[#3177bd] font-[Lato,sans-serif] [font-feature-settings:normal]">
            <StreetMap />

            <div className="absolute top-[18px] left-[18px] flex h-[85px] w-[43px] flex-col bg-white text-[#5c5c5c] shadow-[0_1px_3px_rgba(0,0,0,0.35)]">
              <button className="flex flex-1 items-center justify-center border-b border-[#c9c9c9]">
                <Plus size={19} strokeWidth={1.5} />
              </button>
              <button className="flex flex-1 items-center justify-center">
                <Minus size={20} strokeWidth={1.5} />
              </button>
            </div>

            <div className="absolute top-[18px] right-[18px] flex h-[43px] w-[320px] bg-white shadow-[0_1px_2px_rgba(0,0,0,0.2)]">
              <div className="flex w-[265px] items-center border border-[#8f8f8f] pl-[14px] text-[#6b6b6b]">
                <Search size={22} strokeWidth={1.5} />
                <span className="ml-[17px] text-[18.5px] tracking-[0.6px] whitespace-nowrap">Find address or place</span>
              </div>
            </div>

            <div className="absolute inset-x-0 bottom-0 flex h-[19px] items-center justify-between bg-white/80 pr-[5px] pl-[5px] text-[15px] leading-[19px] whitespace-nowrap text-[#505050]">
              <span className="tracking-[0.63px]">
                Esri Community Maps Contributors, Loma Linda University, City of Redlands, County of Riverside, California State Parks, Esri, TomTom, Ga…
              </span>
              <span className="tracking-[0.7px]">Powered by Esri</span>
            </div>
          </section>
        </main>
      </div>
    </div>
  );
}
